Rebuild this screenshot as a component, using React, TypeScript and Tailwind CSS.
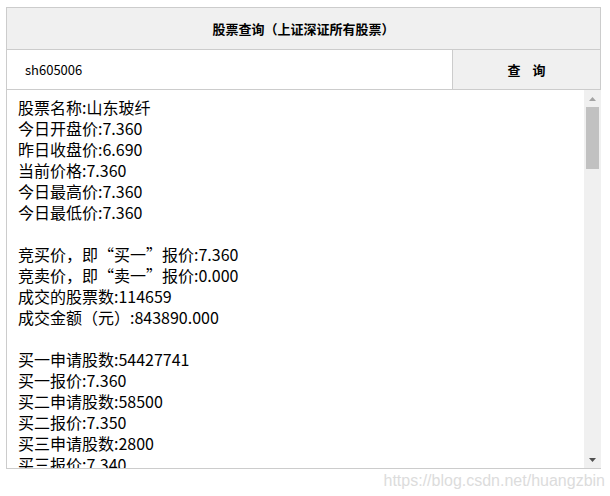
const lines = [
  "股票名称:山东玻纤",
  "今日开盘价:7.360",
  "昨日收盘价:6.690",
  "当前价格:7.360",
  "今日最高价:7.360",
  "今日最低价:7.360",
  "",
  "竞买价，即“买一”报价:7.360",
  "竞卖价，即“卖一”报价:0.000",
  "成交的股票数:114659",
  "成交金额（元）:843890.000",
  "",
  "买一申请股数:54427741",
  "买一报价:7.360",
  "买二申请股数:58500",
  "买二报价:7.350",
  "买三申请股数:2800",
  "买三报价:7.340",
];

export default function App() {
  return (
    <div
      className="w-[610px] h-[496px] bg-white text-black overflow-hidden"
      style={{ fontFamily: '"Microsoft YaHei", "Noto Sans CJK SC", sans-serif' }}
    >
      <div className="ml-[6px] mt-[7px] w-[595px]">
        <div className="h-[43px] border border-[#cccccc] bg-[#f0f0f0] flex items-center justify-center text-[13px] font-bold">
          股票查询（上证深证所有股票）
        </div>
        <div className="h-[40px] flex border-x border-b border-[#cccccc]">
          <div className="w-[445px] flex items-center pl-[18px] text-[13px]">
            sh605006
          </div>
          <div className="flex-1 border-l border-[#cccccc] bg-[#f0f0f0] flex items-center justify-center text-[13px] font-bold">
            查&nbsp;&nbsp;&nbsp;&nbsp;询
          </div>
        </div>
        <div className="h-[379px] flex border-l border-b border-[#cccccc]">
          <div className="flex-1 overflow-hidden pl-[11px] pt-[7px] text-[16px] leading-[21px]">
            {lines.map((l, i) => (
              <div key={i} className="h-[21px] whitespace-pre">
                {l}
              </div>
            ))}
          </div>
          <div className="w-[17px] bg-[#f0f0f0] flex flex-col items-center">
            <div className="h-[17px] flex items-center justify-center">
              <svg width="7" height="4" viewBox="0 0 7 4">
                <path d="M0 4 L3.5 0 L7 4 Z" fill="#a3a3a3" />
              </svg>
            </div>
            <div className="w-[13px] h-[62px] bg-[#c1c1c1]" />
            <div className="flex-1" />
            <div className="h-[17px] flex items-center justify-center">
              <svg width="7" height="4" viewBox="0 0 7 4">
                <path d="M0 0 L3.5 4 L7 0 Z" fill="#505050" />
              </svg>
            </div>
          </div>
        </div>
      </div>
      <div
        className="text-right pr-[5px] text-[16px] text-[#dcdcdc]"
        style={{ fontFamily: '"Liberation Sans", Arial, sans-serif' }}
      >
        https://blog.csdn.net/huangzbin
      </div>
    </div>
  );
}
